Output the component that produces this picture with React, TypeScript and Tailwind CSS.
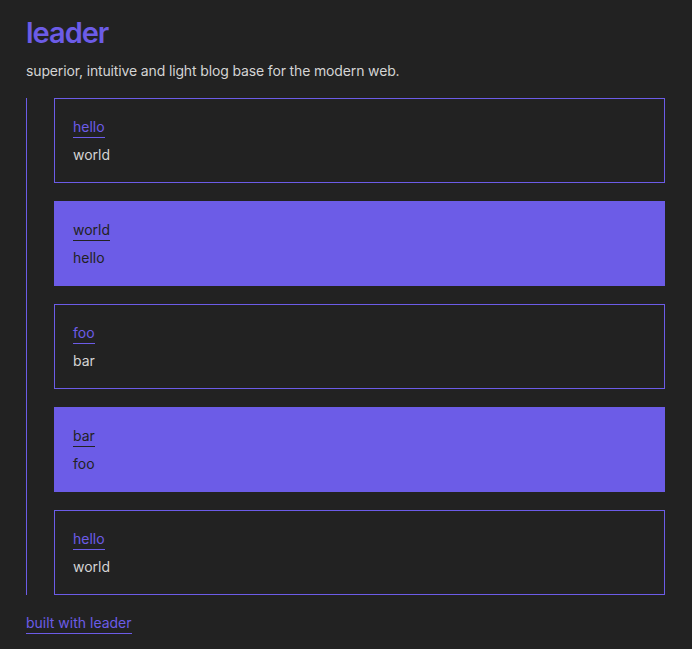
const posts = [
  { title: "hello", body: "world", filled: false },
  { title: "world", body: "hello", filled: true },
  { title: "foo", body: "bar", filled: false },
  { title: "bar", body: "foo", filled: true },
  { title: "hello", body: "world", filled: false },
];

export default function App() {
  return (
    <main
      className="min-h-screen bg-[#222222] pl-[26px] pr-[27px] pt-[14px] pb-6 text-[14px] text-[#d4d4d4]"
      style={{ fontFamily: "Inter, 'Noto Sans', sans-serif" }}
    >
      <h1 className="text-[29px] font-semibold leading-[38px] tracking-[-0.035em] text-[#6c5ce7]">leader</h1>
      <p className="mt-[9px] leading-5 tracking-[-0.01em]">
        superior, intuitive and light blog base for the modern web.
      </p>

      <section className="mt-[17px] flex flex-col gap-[18px] border-l border-[#6c5ce7] pl-[27px]">
        {posts.map((p, i) => (
          <article
            key={i}
            className={
              p.filled
                ? "h-[85px] border border-[#6c5ce7] bg-[#6c5ce7] px-[18px] pt-[17px] text-[#222222]"
                : "h-[85px] border border-[#6c5ce7] px-[18px] pt-[17px]"
            }
          >
            <a
              href="#"
              className={
                p.filled
                  ? "inline-block border-b border-[#222222] leading-5 text-[#222222]"
                  : "inline-block border-b border-[#6c5ce7] leading-5 text-[#6c5ce7]"
              }
            >
              {p.title}
            </a>
            <p className="mt-[7px] leading-5">{p.body}</p>
          </article>
        ))}
      </section>

      <footer className="mt-[17px]">
        <a href="#" className="inline-block border-b border-[#6c5ce7] leading-5 text-[#6c5ce7]">
          built with leader
        </a>
      </footer>
    </main>
  );
}
